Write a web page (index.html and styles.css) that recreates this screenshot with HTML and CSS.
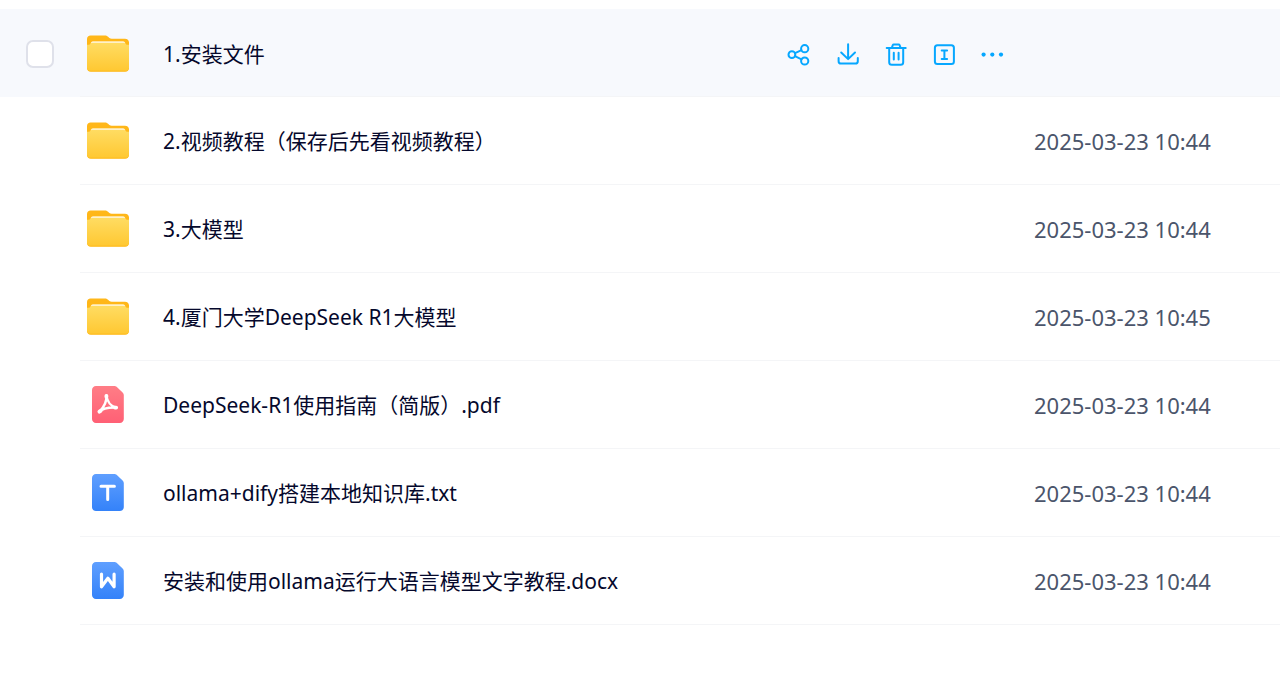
FILE: index.html
```html
<!DOCTYPE html>
<html lang="zh-CN">
<head>
  <meta charset="UTF-8" />
  <meta name="viewport" content="width=device-width, initial-scale=1.0"/>
  <title>文件列表</title>
  <link rel="stylesheet" href="styles.css">
</head>
<body>
  <!-- shared file type icons -->
  <svg class="sprite" aria-hidden="true">
    <defs>
      <linearGradient id="folderBack" x1="0" y1="0" x2="0" y2="1">
        <stop offset="0" stop-color="#ffb71a"/>
        <stop offset="1" stop-color="#ffb50c"/>
      </linearGradient>
      <linearGradient id="folderFront" x1="0" y1="0" x2="0" y2="1">
        <stop offset="0" stop-color="#ffdc62"/>
        <stop offset="1" stop-color="#ffc832"/>
      </linearGradient>
      <linearGradient id="red" x1="0" y1="0" x2="0" y2="1">
        <stop offset="0" stop-color="#ff7d86"/>
        <stop offset="1" stop-color="#ff6075"/>
      </linearGradient>
      <linearGradient id="blue" x1="0" y1="0" x2="0" y2="1">
        <stop offset="0" stop-color="#5f9fff"/>
        <stop offset="1" stop-color="#3482f9"/>
      </linearGradient>
    </defs>
    <symbol id="folder" viewBox="0 0 42 37">
      <path fill="url(#folderBack)" d="M3.5 0.5H18c1.2 0 2 .4 2.8 1.1l1.6 1.4c.7.6 1.4.8 2.3.8H38c2.3 0 4 1.6 4 3.8V33c0 2.2-1.6 3.8-3.8 3.8H3.8C1.6 36.8 0 35.2 0 33V4C0 2 1.5.5 3.5.5z"/>
      <path fill="#fff1c9" d="M6 6.2h30c1.4 0 2.2 1 2.2 2.2V12H3.8V8.4C3.8 7.2 4.6 6.2 6 6.2z"/>
      <path fill="url(#folderFront)" d="M0 9.8c1.3 0 2.7-.2 3.4-.9.5-.6.9-.9 1.8-.9h31.6c.9 0 1.3.3 1.8.9.7.7 2.1.9 3.4.9v22.6c0 2-1.5 3.4-3.6 3.4H3.6C1.5 35.8 0 34.4 0 32.4z"/>
    </symbol>
    <symbol id="pdf" viewBox="0 0 32 37">
      <path fill="url(#red)" d="M4 0h18.5c.8 0 1.5.3 2.1.8l6 5.6c.8.7 1.2 1.5 1.2 2.5V33c0 2.2-1.7 4-4 4H4c-2.3 0-4-1.8-4-4V4c0-2.2 1.7-4 4-4z"/>
      <path fill="none" stroke="#fff" stroke-width="2.4" stroke-linecap="round" stroke-linejoin="round" d="M14.4 9.5c.5 5.5-2.2 11.5-7.2 16.4 3-3.3 8.5-4.7 16.8-4.4-4.8-1-8.8-5.5-9.6-12z"/>
      <path fill="none" stroke="#fff" stroke-width="3.8" stroke-linecap="round" d="M14.4 9.8v1M7.4 25.7l1.2-.8M23 21.6h1.2"/>
    </symbol>
    <symbol id="txt" viewBox="0 0 32 37">
      <path fill="url(#blue)" d="M4 0h18.5c.8 0 1.5.3 2.1.8l6 5.6c.8.7 1.2 1.5 1.2 2.5V33c0 2.2-1.7 4-4 4H4c-2.3 0-4-1.8-4-4V4c0-2.2 1.7-4 4-4z"/>
      <path fill="none" stroke="#fff" stroke-width="3" stroke-linecap="round" d="M9 12.2h13.4M15.7 12.2v13.3"/>
    </symbol>
    <symbol id="docx" viewBox="0 0 32 37">
      <path fill="url(#blue)" d="M4 0h18.5c.8 0 1.5.3 2.1.8l6 5.6c.8.7 1.2 1.5 1.2 2.5V33c0 2.2-1.7 4-4 4H4c-2.3 0-4-1.8-4-4V4c0-2.2 1.7-4 4-4z"/>
      <path fill="none" stroke="#fff" stroke-width="3.2" stroke-linecap="round" stroke-linejoin="round" d="M9.5 12.2v12.6l6.4-8.6 6.2 8.6V12.2"/>
    </symbol>
  </svg>

  <table class="file-list">
    <colgroup>
      <col class="col-check">
      <col>
      <col class="col-actions">
      <col class="col-date">
    </colgroup>
    <tbody>
      <tr class="active">
        <td class="check"><input type="checkbox" class="checkbox" aria-label="选择 1.安装文件"></td>
        <td>
          <a href="#" class="file"><span class="icon"><svg width="42" height="37"><use href="#folder"/></svg></span>1.安装文件</a>
        </td>
        <td>
          <div class="actions">
            <button type="button" aria-label="分享">
              <svg viewBox="0 0 24 24">
                <circle cx="3.9" cy="12.7" r="3.4"/>
                <circle cx="16.7" cy="6.7" r="3.6"/>
                <circle cx="16.7" cy="19" r="3.6"/>
                <path d="M7 11.2l6.5-3M7 14.2l6.5 3.1"/>
              </svg>
            </button>
            <button type="button" aria-label="下载">
              <svg viewBox="0 0 24 24">
                <path d="M12.1 2.3v14.6M5.2 10.5l6.9 6.6 6.9-6.6M2.6 16v3.2c0 1.5.9 2.4 2.4 2.4h14.4c1.5 0 2.4-.9 2.4-2.4V16"/>
              </svg>
            </button>
            <button type="button" aria-label="删除">
              <svg viewBox="0 0 24 24">
                <path d="M2.7 6h19M7.8 5.8l1-2.6c.2-.5.5-.7 1-.7h4.8c.5 0 .8.2 1 .7l1 2.6M5.2 6v14.2c0 1.6 1 2.6 2.6 2.6h8.8c1.6 0 2.6-1 2.6-2.6V6M9.8 10.8v6.8M14.6 10.8v6.8"/>
              </svg>
            </button>
            <button type="button" aria-label="重命名">
              <svg viewBox="0 0 24 24">
                <rect x="2.9" y="3.3" width="19" height="18.8" rx="2.5"/>
                <path d="M9.7 8.6h5.4M12.4 8.6v8.4M9.7 17h5.4"/>
              </svg>
            </button>
            <button type="button" aria-label="更多">
              <svg viewBox="0 0 24 24" class="dots">
                <circle cx="3.6" cy="12.6" r="2.1"/>
                <circle cx="12.3" cy="12.6" r="2.1"/>
                <circle cx="21" cy="12.6" r="2.1"/>
              </svg>
            </button>
          </div>
        </td>
        <td></td>
      </tr>
      <tr>
        <td class="check"></td>
        <td>
          <a href="#" class="file"><span class="icon"><svg width="42" height="37"><use href="#folder"/></svg></span>2.视频教程（保存后先看视频教程）</a>
        </td>
        <td></td>
        <td class="date">2025-03-23 10:44</td>
      </tr>
      <tr>
        <td class="check"></td>
        <td>
          <a href="#" class="file"><span class="icon"><svg width="42" height="37"><use href="#folder"/></svg></span>3.大模型</a>
        </td>
        <td></td>
        <td class="date">2025-03-23 10:44</td>
      </tr>
      <tr>
        <td class="check"></td>
        <td>
          <a href="#" class="file"><span class="icon"><svg width="42" height="37"><use href="#folder"/></svg></span>4.厦门大学DeepSeek R1大模型</a>
        </td>
        <td></td>
        <td class="date">2025-03-23 10:45</td>
      </tr>
      <tr>
        <td class="check"></td>
        <td>
          <a href="#" class="file"><span class="icon"><svg width="32" height="37"><use href="#pdf"/></svg></span>DeepSeek-R1使用指南（简版）.pdf</a>
        </td>
        <td></td>
        <td class="date">2025-03-23 10:44</td>
      </tr>
      <tr>
        <td class="check"></td>
        <td>
          <a href="#" class="file"><span class="icon"><svg width="32" height="37"><use href="#txt"/></svg></span>ollama+dify搭建本地知识库.txt</a>
        </td>
        <td></td>
        <td class="date">2025-03-23 10:44</td>
      </tr>
      <tr>
        <td class="check"></td>
        <td>
          <a href="#" class="file"><span class="icon"><svg width="32" height="37"><use href="#docx"/></svg></span>安装和使用ollama运行大语言模型文字教程.docx</a>
        </td>
        <td></td>
        <td class="date">2025-03-23 10:44</td>
      </tr>
    </tbody>
  </table>
</body>
</html>
```
FILE: styles.css
```css
body {
  margin: 0;
  padding-top: 9px;
  background: #fff;
  color: #05082c;
  font-family: "Noto Sans", "Noto Sans CJK SC", sans-serif;
  font-size: 21px;
  line-height: 32px;
}

.sprite {
  position: absolute;
  width: 0;
  height: 0;
}

.file-list {
  width: 100%;
  table-layout: fixed;
  border-collapse: separate;
  border-spacing: 0;
}

.col-check { width: 80px; }
.col-actions { width: 246px; }
.col-date { width: 246px; }

.file-list td {
  box-sizing: border-box;
  height: 88px;
  padding: 0;
  border-bottom: 1px solid #f4f5f7;
  vertical-align: middle;
}

.file-list .check {
  border-bottom-color: transparent;
  text-align: center;
}

.file-list .active td {
  padding-top: 2px;
  background: #f7f9fd;
}

.checkbox {
  appearance: none;
  display: block;
  box-sizing: border-box;
  width: 28px;
  height: 28px;
  margin: 0 auto;
  border: 2px solid #dfe1ea;
  border-radius: 7px;
  background: #fff;
  cursor: pointer;
}

.checkbox:checked {
  border-color: #06a7ff;
  background: #06a7ff;
}

.file {
  display: flex;
  align-items: center;
  gap: 34px;
  padding-left: 7px;
  color: inherit;
  text-decoration: none;
  white-space: nowrap;
}

.file:hover {
  color: #06a7ff;
}

.icon {
  display: flex;
  justify-content: center;
  flex: none;
  width: 42px;
}

.actions {
  display: flex;
  gap: 24px;
}

.actions button {
  width: 24px;
  height: 24px;
  padding: 0;
  border: none;
  background: none;
  cursor: pointer;
}

.actions svg {
  display: block;
  width: 24px;
  height: 24px;
  overflow: visible;
  fill: none;
  stroke: #06a7ff;
  stroke-width: 2;
  stroke-linecap: round;
  stroke-linejoin: round;
}

.actions .dots {
  fill: #06a7ff;
  stroke: none;
}

.date {
  color: #4b556b;
  font-size: 22px;
  white-space: nowrap;
}
```
